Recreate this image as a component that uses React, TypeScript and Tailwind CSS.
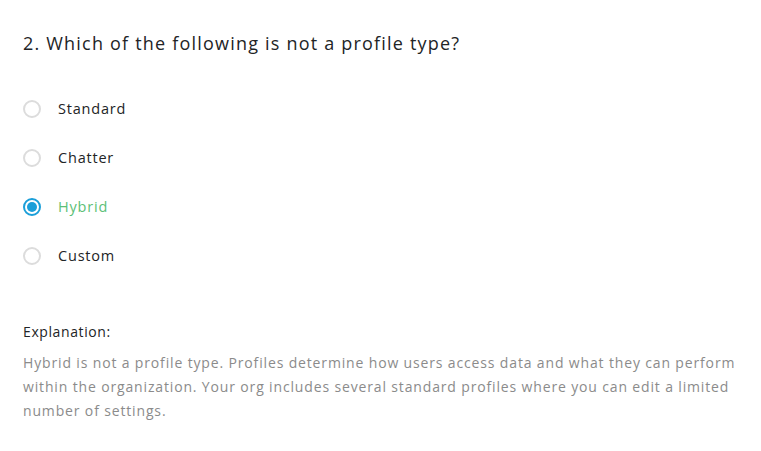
import React from "react";

const options = ["Standard", "Chatter", "Hybrid", "Custom"];

export default function App() {
  const selected = "Hybrid";
  return (
    <div className="w-[761px] h-[451px] bg-white px-[23px] pt-[30px] font-['Open_Sans',sans-serif]">
      <h2 className="text-[18px] leading-[26px] text-[#222426] tracking-[1.2px]">
        2. Which of the following is not a profile type?
      </h2>
      <div className="mt-[28px] flex flex-col">
        {options.map((o) => {
          const on = o === selected;
          return (
            <div key={o} className="flex items-center h-[49px]">
              {on ? (
                <span className="w-[18px] h-[18px] rounded-full border-[2px] border-[#1b9fd9] flex items-center justify-center">
                  <span className="w-[10px] h-[10px] rounded-full bg-[#1b9fd9]" />
                </span>
              ) : (
                <span className="w-[18px] h-[18px] rounded-full border-[2px] border-[#dcdcdc]" />
              )}
              <span
                className={`ml-[17px] text-[14.5px] tracking-[0.8px] ${on ? "text-[#5cbf77]" : "text-[#222426]"}`}
              >
                {o}
              </span>
            </div>
          );
        })}
      </div>
      <div className="mt-[41px] text-[14px] text-[#222426] tracking-[0.6px]">Explanation:</div>
      <p className="mt-[9px] text-[14px] leading-[24px] text-[#8b8b8b] tracking-[0.85px]">
        Hybrid is not a profile type. Profiles determine how users access data and what they can perform
        within the organization. Your org includes several standard profiles where you can edit a limited
        number of settings.
      </p>
    </div>
  );
}
